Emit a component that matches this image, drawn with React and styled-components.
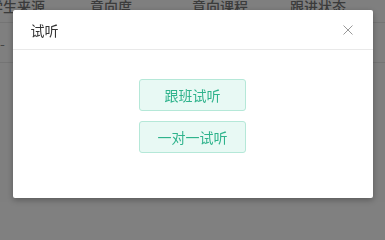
import React from 'react'
import styled, { createGlobalStyle } from 'styled-components';

const GlobalStyle = createGlobalStyle`
	html, body {
		margin: 0;
		padding: 0;
		background: #808080;
		font-family: 'Noto Sans CJK SC', 'Microsoft YaHei', sans-serif;
		overflow: hidden;
	}
	*, *::before, *::after {
		box-sizing: border-box;
	}
`;

const Page = styled.div`
	width: 385px;
	height: 202px;
	overflow: hidden;
	background: #fff;
`;

const Table = styled.div`
	margin-left: -11px;
	margin-top: -11px;
`;

const Row = styled.div`
	display: grid;
	grid-template-columns: 101px 102px 98px 100px;
	align-items: center;
	height: ${p => p.$height}px;
	border-bottom: 1px solid #e8e8e8;
	font-size: 14px;
	color: ${p => p.$head ? '#777' : '#8a8a8a'};
	font-weight: ${p => p.$head ? 500 : 400};
`;

const Cell = styled.div`
	white-space: nowrap;
	padding-left: ${p => p.$indent || 0}px;
`;

const Overlay = styled.div`
	position: fixed;
	left: 0;
	top: 0;
	width: 385px;
	height: 202px;
	background: rgba(0, 0, 0, 0.5);
	display: flex;
	justify-content: center;
	align-items: flex-start;
	padding-top: 10px;
`;

const Modal = styled.div`
	width: 360px;
	height: 188px;
	background: #fff;
	border-radius: 2px;
	box-shadow: 0 2px 6px rgba(0, 0, 0, 0.3);
	display: flex;
	flex-direction: column;
`;

const Header = styled.div`
	height: 40px;
	flex: none;
	display: flex;
	align-items: center;
	justify-content: space-between;
	padding: 0 20px 0 18px;
	border-bottom: 1px solid #e9e9e9;
`;

const Title = styled.div`
	font-size: 14px;
	color: #333;
`;

const Close = styled.button`
	border: none;
	background: none;
	padding: 0;
	width: 10px;
	height: 10px;
	display: flex;
	align-items: center;
	justify-content: center;
	cursor: pointer;
`;

const Body = styled.div`
	flex: 1;
	display: flex;
	flex-direction: column;
	align-items: center;
	gap: 10px;
	padding-top: 29px;
`;

const TrialButton = styled.button`
	width: 107px;
	height: 32px;
	border: 1px solid #b5e8d8;
	border-radius: 3px;
	background: #e8f9f4;
	color: #2fb38c;
	font-size: 14px;
	font-family: 'Noto Sans CJK SC', sans-serif;
	cursor: pointer;
`;

export default function App(){
	return <>
		<GlobalStyle />
		<Page>
			<Table>
				<Row $head $height={34}>
					<Cell>学生来源</Cell>
					<Cell>意向度</Cell>
					<Cell>意向课程</Cell>
					<Cell>跟进状态</Cell>
				</Row>
				<Row $height={40}>
					<Cell $indent={11}>-</Cell>
					<Cell />
					<Cell />
					<Cell />
				</Row>
			</Table>
		</Page>
		<Overlay>
			<Modal>
				<Header>
					<Title>试听</Title>
					<Close aria-label="close">
						<svg width="10" height="10" viewBox="0 0 10 10">
							<path d="M0.5 0.5L9.5 9.5M9.5 0.5L0.5 9.5" stroke="#999" strokeWidth="1" />
						</svg>
					</Close>
				</Header>
				<Body>
					<TrialButton>跟班试听</TrialButton>
					<TrialButton>一对一试听</TrialButton>
				</Body>
			</Modal>
		</Overlay>
	</>
}
